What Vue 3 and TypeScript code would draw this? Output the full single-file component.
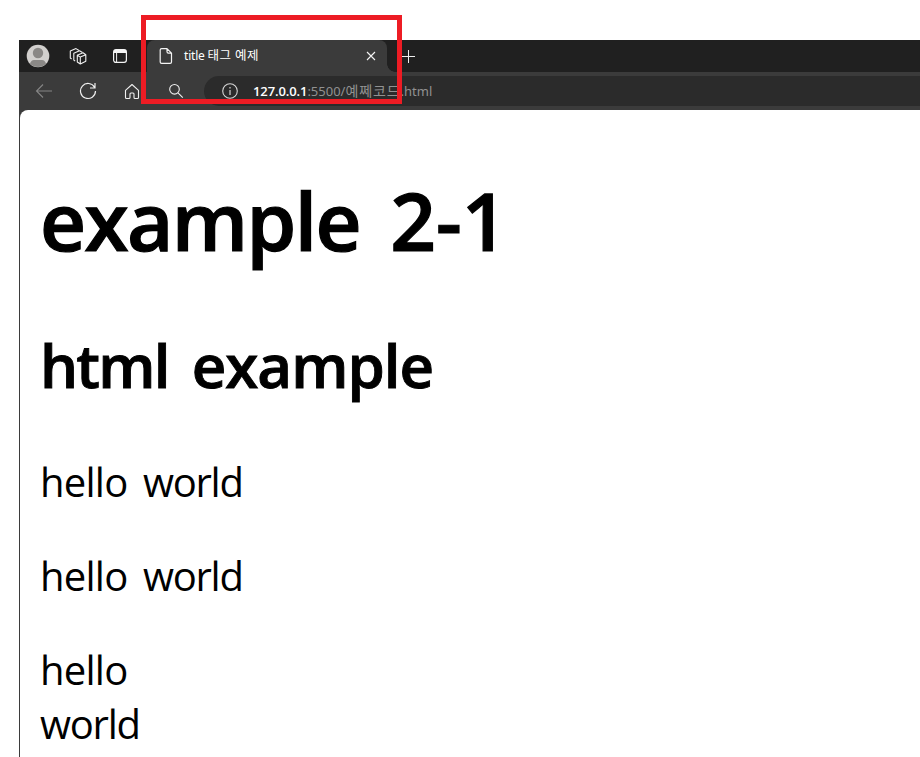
<script setup lang="ts">
const paragraphs: string[][][] = [[['hello', 'world']], [['hello', 'world']], [['hello'], ['world']]]
</script>

<template>
  <div class="page">
    <div class="browser">
      <div class="tabs">
        <svg class="avatar" width="24" height="24" viewBox="0 0 24 24">
          <circle cx="12" cy="12" r="11.3" fill="#d2d0ce" />
          <circle cx="12" cy="9" r="5.200" fill="#8a8886" />
          <path d="M4 19.800Q5 16 8 16h8q3 0 4 3.800a11.300 11.300 0 0 1-16 0z" fill="#8a8886" />
        </svg>
        <svg class="workspaces" width="18" height="18" viewBox="0 0 18 18" fill="none" stroke="#f0f0f0" stroke-width="1.1" stroke-linejoin="round" stroke-linecap="round">
          <path d="M8.300 8.200L14 5.800l2.800 2v6.400l-5.500 2.800-3-2zM8.300 8.200l3 1.900 5.500-2.300M11.300 10.100V17" />
          <path d="M5.800 13.800l-1-.7V6.200l5.700-2.500 2.600 1.600" />
          <path d="M2.300 11.700l-1-.7V4.100L7 1.600l2.600 1.600" />
        </svg>
        <svg class="tab-menu" width="16" height="16" viewBox="0 0 16 16">
          <rect x="1.600" y="1.600" width="12.800" height="12.800" rx="2.300" fill="none" stroke="#f4f4f4" stroke-width="1.200" />
          <path d="M2 2h12v3H2z" fill="#f4f4f4" />
          <path d="M4.600 5v9" stroke="#f4f4f4" stroke-width="1" />
        </svg>
        <div class="tab">
          <svg class="file" width="14" height="18" viewBox="0 0 14 18" fill="none" stroke="#f4f4f4" stroke-width="1.200" stroke-linejoin="round">
            <path d="M2.600 1.600h5.400l4.500 4.500v8.900q0 1.400-1.400 1.400H2.600q-1.400 0-1.400-1.400V3q0-1.400 1.400-1.400zM8 1.600v3.100q0 1.400 1.400 1.400h3.100" />
          </svg>
          <span class="tab-title">title <span class="tab-korean">태그 예제</span></span>
          <svg class="close" width="10" height="10" viewBox="0 0 10 10" stroke="#f4f4f4" stroke-width="1.100">
            <path d="M1 1l8 8M9 1L1 9" />
          </svg>
        </div>
        <svg class="plus" width="15" height="15" viewBox="0 0 15 15" stroke="#eee" stroke-width="1">
          <path d="M7.500 1v13M1 7.500h13" />
        </svg>
      </div>
      <div class="toolbar">
        <svg class="back" width="18" height="16" viewBox="0 0 18 16" fill="none" stroke="#858585" stroke-width="1.100">
          <path d="M17 8H1.500M8 1.500L1.500 8 8 14.500" />
        </svg>
        <svg class="reload" width="18" height="18" viewBox="0 0 18 18" fill="none" stroke="#f0f0f0" stroke-width="1.200">
          <path d="M15.600 5.400A7.500 7.500 0 1 0 16.500 9M16 1v5h-5" />
        </svg>
        <svg class="home" width="16" height="17" viewBox="0 0 16 17" fill="none" stroke="#f0f0f0" stroke-width="1.100" stroke-linejoin="round">
          <path d="M1.500 7.300L8 1.500l6.500 5.800v7.200q0 1-1 1H11q-1 0-1-1V11q0-1-1-1H7q-1 0-1 1v3.500q0 1-1 1H2.500q-1 0-1-1z" />
        </svg>
        <svg class="search" width="16" height="16" viewBox="0 0 16 16" fill="none" stroke="#f0f0f0" stroke-width="1.100">
          <circle cx="6.500" cy="6.300" r="4.800" /><path d="M10 9.800l4.800 4.800" />
        </svg>
        <div class="address">
          <svg class="info" width="16" height="16" viewBox="0 0 16 16" fill="none" stroke="#d5d5d5">
            <circle cx="8" cy="8" r="7.300" stroke-width="1.100" />
            <path d="M8 7v5M8 4v1.400" stroke-width="1.200" />
          </svg>
          <span class="url"><b>127.0.0.1</b>:5500/<span class="url-korean">예쩨코드</span>.html</span>
        </div>
      </div>
      <main class="document">
        <h1><span class="name">example</span> 2-1</h1>
        <h2><span class="html">html</span> <span class="name">example</span></h2>
        <p v-for="(lines, i) in paragraphs" :key="i">
          <span v-for="(words, j) in lines" :key="j" class="line"><template v-for="(word, k) in words" :key="k">{{ k > 0 ? ' ' : '' }}<span :class="word">{{ word }}</span></template></span>
        </p>
      </main>
    </div>
    <div class="highlight"></div>
  </div>
</template>

<style>
body { background: #fff; }
</style>

<style scoped>
.page {
  position: relative;
  box-sizing: border-box;
  width: 920px;
  height: 757px;
  padding: 40px 0 0 19px;
  overflow: hidden;
  font-family: "Noto Sans", "Noto Sans CJK KR", sans-serif;
}
.browser {
  display: flex;
  flex-direction: column;
  height: 717px;
  background: #3b3b3b;
}
svg { display: block; flex: none; }
.tabs {
  display: flex;
  align-items: center;
  height: 32px;
  background: #202020;
}
.avatar { margin-left: 7px; }
.workspaces { margin-left: 19px; }
.tab-menu { margin-left: 25px; }
.tab {
  position: relative;
  box-sizing: border-box;
  display: flex;
  align-items: center;
  width: 240px;
  height: 32px;
  margin-left: 19px;
  padding: 0 11px 0 12px;
  border-radius: 8px 8px 0 0;
  background: #3b3b3b;
}
.tab::after {
  content: "";
  position: absolute;
  left: 100%;
  bottom: 0;
  width: 8px;
  height: 8px;
  background: radial-gradient(circle at 100% 0, transparent 7.5px, #3b3b3b 8px);
}
.tab-title {
  margin-left: 11px;
  color: #fff;
  font-size: 12px;
  line-height: 20px;
  letter-spacing: -.2px;
  white-space: nowrap;
}
.tab-korean { font-size: 12.5px; line-height: 1; letter-spacing: .4px; }
.close { margin-left: auto; }
.plus { margin-left: 14px; }
.toolbar {
  display: flex;
  align-items: center;
  height: 38px;
  background: #3b3b3b;
}
.back { margin-left: 16px; }
.reload { margin-left: 26px; }
.home { margin-left: 27px; }
.search { margin-left: 28px; }
.address {
  display: flex;
  align-items: center;
  flex: 1;
  height: 30px;
  margin-left: 20px;
  border-radius: 15px 0 0 15px;
  background: #2b2b2b;
}
.info { margin-left: 18px; }
.url {
  margin-left: 15px;
  color: #919191;
  font-size: 13px;
  line-height: 20px;
  white-space: nowrap;
}
.url b { color: #fff; font-family: "Open Sans", sans-serif; font-weight: 600; letter-spacing: -.1px; }
.url-korean { font-size: 14px; line-height: 1; letter-spacing: .9px; }
.document {
  flex: 1;
  margin-left: 1px;
  padding: 57px 0 0 20px;
  overflow: hidden;
  border-radius: 8px 0 0 0;
  background: #fff;
  color: #000;
}
h1, h2, p { margin: 0; white-space: nowrap; font-family: "Open Sans", "Noto Sans", sans-serif; }
h1 { height: 158px; font-size: 80px; line-height: 106px; font-weight: 650; word-spacing: 9.5px; -webkit-text-stroke: 1.2px #000; }
h2 { height: 130px; font-size: 60px; line-height: 80px; font-weight: 650; word-spacing: 7.5px; -webkit-text-stroke: .9px #000; }
p { margin-bottom: 40px; font-size: 40px; line-height: 54px; word-spacing: 5px; }
h1 .name { letter-spacing: -1.6px; }
h2 .html { letter-spacing: -1.8px; }
h2 .name { letter-spacing: -1px; }
.line { display: block; }
.hello { letter-spacing: -.75px; }
.world { letter-spacing: -1.25px; }
.highlight {
  position: absolute;
  left: 141px;
  top: 15px;
  box-sizing: border-box;
  width: 261px;
  height: 89px;
  border: 5px solid #ed1c24;
}
</style>
